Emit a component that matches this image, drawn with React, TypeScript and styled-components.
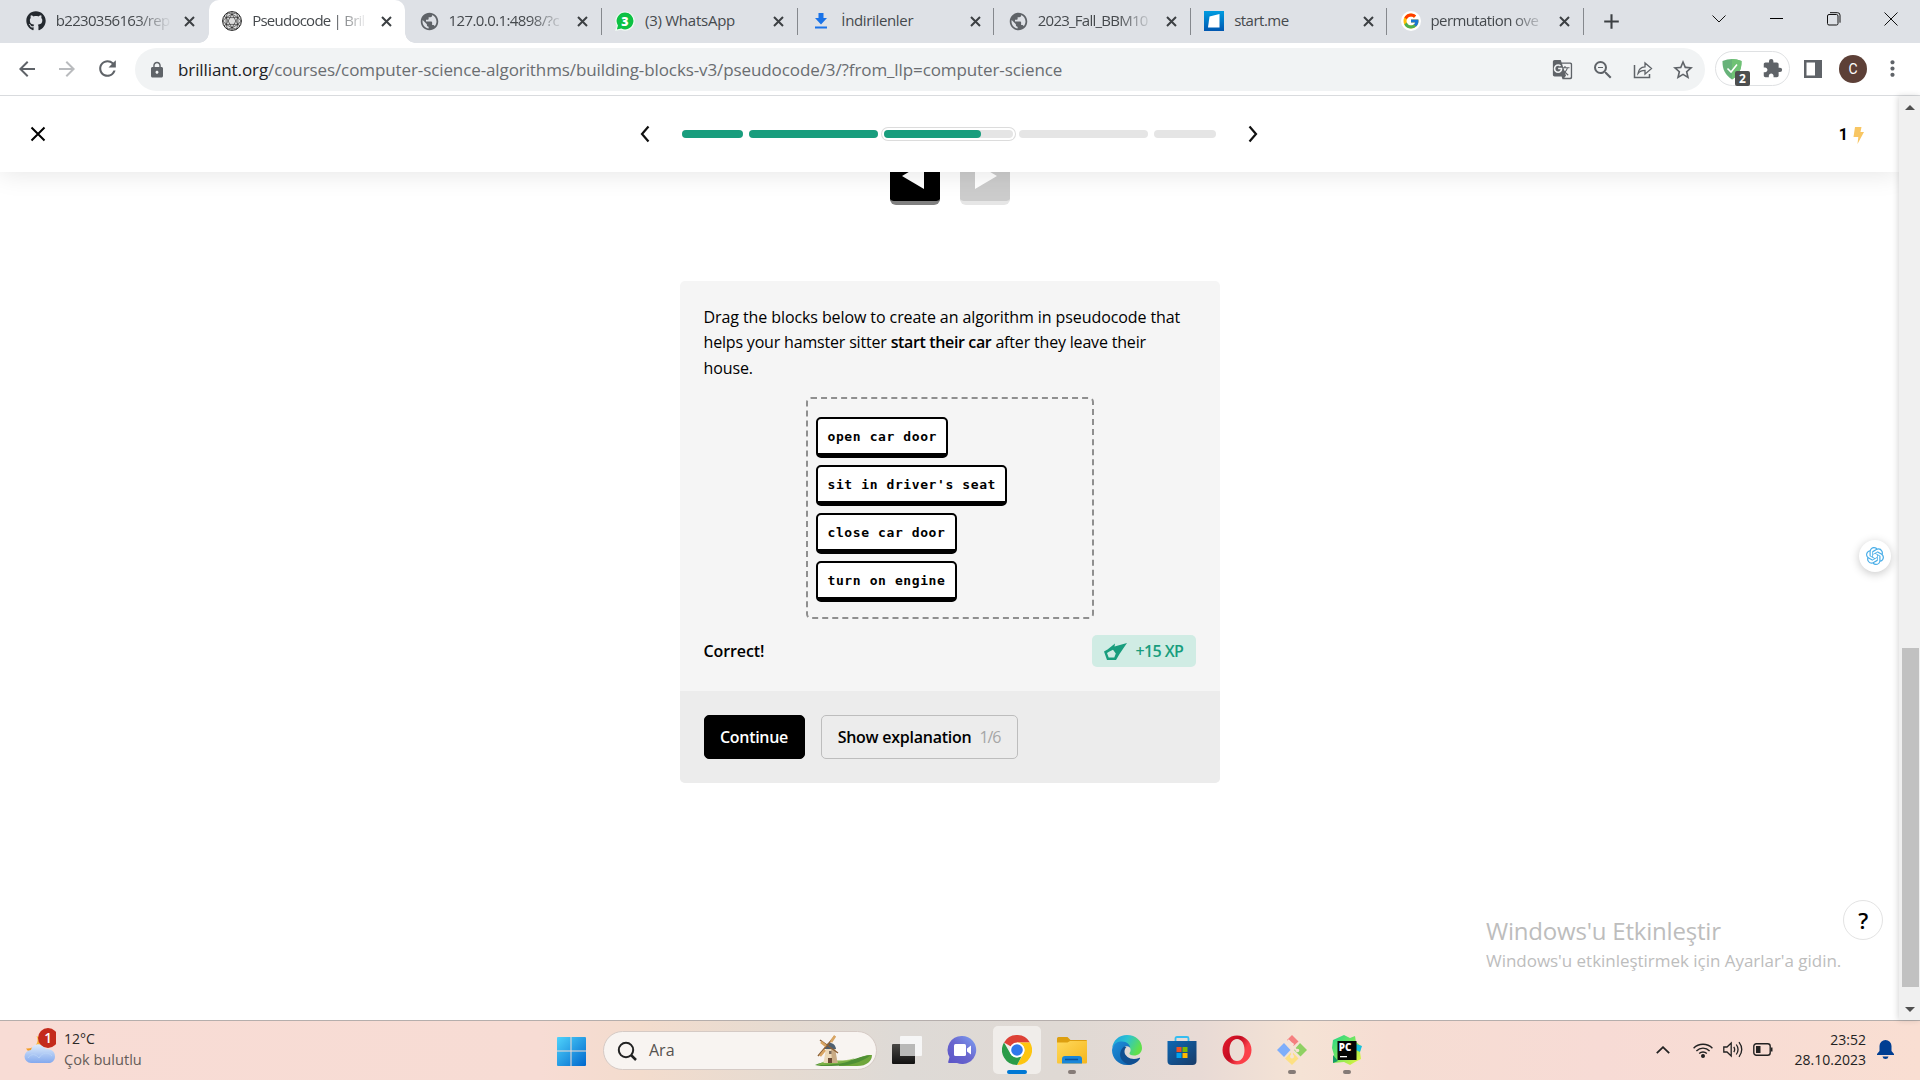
import React from 'react';
import styled, { createGlobalStyle } from 'styled-components';
import { FaGithub } from 'react-icons/fa';
import {
  MdLock, MdExtension, MdStarBorder, MdRefresh, MdPublic, MdArrowBack, MdArrowForward, MdAdd,
  MdGTranslate, MdZoomOut, MdMoreVert,
} from 'react-icons/md';
import { FcGoogle } from 'react-icons/fc';
import { SiOpenai } from 'react-icons/si';

const Global = createGlobalStyle`
  * { box-sizing: border-box; }
  body { margin: 0; overflow: hidden; background: #fff; }
  button { font: inherit; border: 0; padding: 0; background: none; color: inherit; }
  svg { display: block; flex: none; }
`;

const Screen = styled.div`
  width: 1920px;
  height: 1080px;
  display: grid;
  grid-template-rows: 43px 53px 924px 60px;
  overflow: hidden;
  font-family: 'Open Sans', 'Noto Sans', sans-serif;
  color: #000;
`;

/* ---------- tab strip ---------- */
const TabStrip = styled.div`
  display: flex;
  background: #dee1e6;
  padding-left: 12.4px;
`;
const Tab = styled.div<{ $active?: boolean; $line?: boolean }>`
  position: relative;
  width: 196.4px;
  height: 43px;
  display: flex;
  align-items: center;
  padding: 0 0 1px 13.4px;
  color: #45494d;
  border-right: 1px solid transparent;
  border-image: ${p => (p.$line ? 'linear-gradient(transparent 9px, #85888d 9px, #85888d 34px, transparent 34px) 1' : 'none')};
  border-width: 0 1px 0 0;
  ${p => p.$active && `
    background: #fff;
    border-radius: 10px 10px 0 0;
    &::before, &::after {
      content: '';
      position: absolute;
      bottom: 0;
      width: 10px;
      height: 10px;
    }
    &::before { left: -10px; background: radial-gradient(circle at 0 0, transparent 9.5px, #fff 10px); }
    &::after { right: -11px; background: radial-gradient(circle at 100% 0, transparent 9.5px, #fff 10px); }
  `}
`;
const Favicon = styled.span`
  width: 20px;
  height: 20px;
  display: grid;
  place-items: center;
  margin-right: 10px;
`;
const TabTitle = styled.span<{ $spacing: number; $fade?: boolean }>`
  width: 114px;
  padding-bottom: 2px;
  overflow: hidden;
  white-space: nowrap;
  font-size: 15px;
  line-height: 22px;
  letter-spacing: ${p => p.$spacing}px;
  mask-image: ${p => (p.$fade ? 'linear-gradient(90deg, #000 80px, transparent 116px)' : 'none')};
`;
const TabClose = styled.button`
  width: 18px;
  height: 18px;
  display: grid;
  place-items: center;
  margin: 1px 0 0 11px;
`;
const NewTab = styled.button`
  width: 24px;
  display: grid;
  place-items: center;
  margin-left: 15px;
  color: #3c4043;
`;
const WindowButtons = styled.div`
  margin-left: auto;
  display: flex;
  height: 37px;
`;
const WindowButton = styled.button`
  width: 57.4px;
  display: grid;
  place-items: center;
`;

/* ---------- toolbar ---------- */
const Toolbar = styled.div`
  display: flex;
  align-items: flex-start;
  background: #fff;
  border-bottom: 1px solid #d9dbde;
  color: #5f6368;
`;
const NavButtons = styled.div`
  display: flex;
  align-items: center;
  height: 51px;
  width: 135px;
  padding-left: 15px;
  gap: 16px;
`;
const Omnibox = styled.div`
  width: 1570px;
  height: 43px;
  margin-top: 5px;
  border-radius: 22px;
  background: #f1f3f4;
  display: flex;
  align-items: center;
  padding: 0 10px 0 13px;
`;
const Url = styled.span`
  flex: 1;
  margin-left: 12px;
  padding-bottom: 1px;
  font-size: 17px;
  letter-spacing: -0.1px;
  color: #6a6d71;
  b { font-weight: 400; color: #202124; }
`;
const OmniIcons = styled.div`
  display: flex;
  align-items: center;
  gap: 18px;
`;
const ExtensionPill = styled.div`
  width: 75px;
  height: 35px;
  margin: 8px 0 0 10px;
  border: 1px solid #dfe1e3;
  border-radius: 18px;
  display: flex;
  align-items: center;
  justify-content: space-between;
  padding: 0 6px;
`;
const ShieldBox = styled.span`
  position: relative;
  display: block;
`;
const ShieldCount = styled.span`
  position: absolute;
  left: 13px;
  top: 13px;
  width: 15px;
  height: 15px;
  border-radius: 2px;
  background: #4d4f4f;
  color: #fff;
  font: 700 12px/15px 'Open Sans', sans-serif;
  text-align: center;
`;
const Avatar = styled.span`
  width: 28px;
  height: 28px;
  border-radius: 50%;
  background: #5d4037;
  color: #fff;
  font: 400 14px/28px Roboto, sans-serif;
  text-align: center;
`;
const ToolbarEnd = styled.div`
  display: flex;
  align-items: center;
  height: 51px;
  margin-left: 14px;
  gap: 17px;
  svg:last-child { margin-left: -4px; }
`;

/* ---------- page ---------- */
const Viewport = styled.div`
  position: relative;
  display: grid;
  grid-template-columns: 1899px 21px;
  min-height: 0;
`;
const Page = styled.main`
  display: flex;
  flex-direction: column;
  align-items: center;
  overflow: hidden;
  background: #fff;
`;
const LessonHeader = styled.header`
  z-index: 1;
  flex: none;
  width: 100%;
  height: 76px;
  display: grid;
  grid-template-columns: 1fr 620px 1fr;
  align-items: center;
  background: #fff;
  box-shadow: 0 2px 24px rgba(0, 0, 0, 0.1);
  padding: 0 34px 0 29px;
`;
const ProgressNav = styled.div`
  display: flex;
  align-items: center;
  justify-content: space-between;
  margin: 0 -2px 0 2px;
`;
const Segments = styled.div`
  display: flex;
  align-items: center;
  gap: 6px;
`;
const Segment = styled.div<{ $width: number; $fill: number; $current?: boolean }>`
  width: ${p => p.$width}px;
  height: 8px;
  border-radius: 4px;
  background: #e5e5e5;
  box-shadow: ${p => (p.$current ? '0 0 0 2px #fff, 0 0 0 3px #dcdcdc' : 'none')};
  &::before {
    content: '';
    display: block;
    width: ${p => p.$fill}%;
    height: 8px;
    border-radius: 4px;
    background: #189d7d;
  }
`;
const Streak = styled.div`
  justify-self: end;
  display: flex;
  align-items: center;
  gap: 5px;
  margin-right: 1px;
  padding-top: 2px;
  font: 700 16px/20px Roboto, sans-serif;
`;
const Stepper = styled.div`
  display: flex;
  gap: 20px;
  margin-top: -21px;
`;
const StepButton = styled.button<{ $disabled?: boolean }>`
  width: 50px;
  height: 54px;
  padding: 12px ${p => (p.$disabled ? 0 : 3)}px 0 ${p => (p.$disabled ? 3 : 0)}px;
  display: flex;
  justify-content: center;
  border-bottom: 4px solid ${p => (p.$disabled ? '#e6e6e6' : '#808080')};
  border-radius: 6px;
  background: ${p => (p.$disabled ? '#ccc' : '#000')};
`;
const Card = styled.section`
  width: 540px;
  height: 502px;
  margin-top: 76px;
  border-radius: 5px;
  overflow: hidden;
  background: #f5f5f5;
  display: flex;
  flex-direction: column;
`;
const CardBody = styled.div`
  height: 410px;
  padding: 24px 24px 0;
`;
const Prompt = styled.p`
  margin: 0;
  font-size: 16px;
  line-height: 25.4px;
  white-space: nowrap;
  b { font-weight: 600; letter-spacing: -0.36px; }
`;
const Line = styled.span<{ $spacing: number }>`
  display: block;
  letter-spacing: ${p => p.$spacing}px;
`;
const DropZone = styled.div`
  width: 288px;
  height: 222px;
  margin: 15.8px auto 0;
  border: 2px dashed #8f8f8f;
  border-radius: 5px;
  padding: 18px 8px;
  display: flex;
  flex-direction: column;
  align-items: flex-start;
  gap: 7px;
`;
const Block = styled.div`
  height: 41px;
  border: 2px solid #000;
  border-bottom-width: 5px;
  border-radius: 5px;
  background: #fff;
  padding: 1px 9.3px 0 10px;
  font: 700 13px/34px 'DejaVu Sans Mono', 'Liberation Mono', monospace;
  letter-spacing: 0.6px;
`;
const ResultRow = styled.div`
  display: flex;
  justify-content: space-between;
  align-items: center;
  height: 32px;
  margin-top: 16px;
`;
const Label = styled.span<{ $spacing?: number; $size?: number }>`
  font-weight: 600;
  font-size: ${p => p.$size ?? 16}px;
  letter-spacing: ${p => p.$spacing ?? -0.3}px;
  white-space: nowrap;
`;
const XpBadge = styled.div`
  width: 104px;
  height: 32px;
  border-radius: 5px;
  background: #d0ece4;
  color: #189d7d;
  display: flex;
  align-items: center;
  padding-left: 12px;
  gap: 9px;
`;
const CardFooter = styled.footer`
  height: 92px;
  background: #ececec;
  display: flex;
  align-items: center;
  gap: 16px;
  padding: 0 24px;
`;
const ActionButton = styled.button<{ $primary?: boolean }>`
  width: ${p => (p.$primary ? 101 : 197)}px;
  height: 44px;
  border-radius: 5px;
  border: 1px solid ${p => (p.$primary ? '#000' : '#bdbdbd')};
  background: ${p => (p.$primary ? '#000' : 'transparent')};
  color: ${p => (p.$primary ? '#fff' : '#000')};
  display: flex;
  align-items: center;
  justify-content: center;
  gap: 8px;
  small { font-size: 16px; letter-spacing: -1.1px; color: #a6a6a6; }
`;
const RoundButton = styled.button<{ $right: number; $top: number; $size: number; $shadow?: boolean }>`
  position: absolute;
  right: ${p => p.$right}px;
  top: ${p => p.$top}px;
  width: ${p => p.$size}px;
  height: ${p => p.$size}px;
  border-radius: 50%;
  display: grid;
  place-items: center;
  background: #fff;
  border: ${p => (p.$shadow ? '0' : '1px solid #e3e3e3')};
  box-shadow: ${p => (p.$shadow ? '0 2px 10px rgba(0,0,0,.22)' : 'none')};
`;
const Watermark = styled.div`
  position: absolute;
  left: 1486px;
  top: 818px;
  color: #bdbdbd;
  white-space: nowrap;
  div:first-child { font-size: 24px; line-height: 33px; letter-spacing: -0.2px; }
  div:last-child { font-size: 17px; line-height: 27px; letter-spacing: -0.03px; }
`;
const Scrollbar = styled.div`
  z-index: 1;
  display: flex;
  flex-direction: column;
  align-items: center;
  justify-content: space-between;
  background: #f0f0f0;
  box-shadow: -1px 0 6px rgba(0, 0, 0, 0.16);
  padding: 9px 0 8px 1px;
`;
const Thumb = styled.div`
  width: 17px;
  height: 339px;
  margin-top: 518px;
  background: #c1c1c1;
`;

/* ---------- taskbar ---------- */
const Taskbar = styled.div`
  display: grid;
  grid-template-columns: 556px 1fr auto;
  align-items: center;
  border-top: 1px solid #b5aeac;
  background: linear-gradient(90deg, #f8dcd5 0, #f7dcd4 540px, #f3dccd 640px, #e6dbd1 780px, #dedad6 900px, #dfd9d4 1060px, #e8dad5 1200px, #f5e3d5 1300px, #f6ddd3 1390px, #f7dbd5 1600px, #f9ded2 1920px);
`;
const Weather = styled.div`
  display: flex;
  align-items: center;
  gap: 8px;
  padding-left: 24px;
  margin-top: -7px;
`;
const WeatherText = styled.div`
  margin-top: 4px;
  font-size: 14px;
  line-height: 20px;
  color: #2b2927;
  div:last-child { font-size: 14.6px; color: #655c59; }
`;
const TaskApps = styled.div`
  display: flex;
  align-items: center;
`;
const SearchPill = styled.div`
  width: 274px;
  height: 39px;
  margin: 0 6px 0 17px;
  border: 1px solid #d5cac5;
  border-radius: 20px;
  background: #f8f4f1;
  overflow: hidden;
  display: flex;
  align-items: center;
  padding: 0 3px 0 13px;
  font-size: 16px;
  color: #56524f;
  svg:last-child { margin-left: auto; }
  span { margin: -1px 0 0 12px; }
`;
const TaskTile = styled.div<{ $active?: boolean; $mark?: boolean }>`
  width: 48px;
  height: 48px;
  margin: 0 7px 1px 0;
  border-radius: 5px;
  background: ${p => (p.$active ? '#f0edea' : 'transparent')};
  display: flex;
  flex-direction: column;
  align-items: center;
  justify-content: flex-end;
  gap: 5px;
  &::after {
    content: '';
    width: ${p => (p.$active ? 20 : 8)}px;
    height: 4px;
    border-radius: 2px;
    background: ${p => (p.$active ? '#0078d4' : p.$mark ? '#857b77' : 'transparent')};
  }
`;
const Tray = styled.div`
  display: flex;
  align-items: center;
  padding: 0 26px 2px 0;
  color: #222;
`;
const TrayIcons = styled.div`
  display: flex;
  align-items: center;
  gap: 10px;
  margin: 0 19px 0 23px;
`;
const Clock = styled.div`
  width: 74px;
  margin-right: 11px;
  text-align: right;
  font-size: 14px;
  line-height: 20px;
`;

/* ---------- icons ---------- */
const CloseIcon = () => (
  <svg width="11" height="11" viewBox="0 0 11 11" stroke="#3c4043" strokeWidth="2"><path d="m1 1 9 9m0-9-9 9" /></svg>
);
const BrilliantIcon = () => (
  <svg width="20" height="20" viewBox="0 0 20 20" fill="none" stroke="#222" strokeWidth="0.6">
    <circle cx="10" cy="10" r="9.400" fill="#dcdcdc" strokeWidth="1" />
    <path d="M10 3.200 15.900 6.600v6.800L10 16.800 4.100 13.400V6.600zM10 3.200V.8M15.900 6.600l2.100-1.300M15.900 13.400l2.100 1.400M10 16.800v2.400M4.100 13.400 2 14.800M4.100 6.600 2 5.300M10 3.200 5.500 1.800 4.100 6.600.8 10l3.300 3.400 1.400 4.900 4.500-1.500 4.500 1.500 1.400-4.900 3.300-3.400-3.300-3.400-1.400-4.800zM10 3.200l5.900 10.200H4.100zM10 16.800 4.100 6.600h11.800z" />
  </svg>
);
const WhatsAppIcon = () => (
  <svg width="20" height="20" viewBox="0 0 20 20">
    <path d="M10 1a9 9 0 1 1-3.900 17.100L1 19.300l1.300-4.700A9 9 0 0 1 10 1z" fill="#0cc143" stroke="#f2faf4" strokeWidth="1.200" />
    <text x="9.800" y="14.500" fontFamily="Open Sans, sans-serif" fontWeight="800" fontSize="12.500" fill="#fff" textAnchor="middle">3</text>
  </svg>
);
const DownloadIcon = () => (
  <svg width="14" height="16" viewBox="0 0 14 16" fill="#1a73e8">
    <path d="M4.500 0h5v5H13l-6 6.500L1 5h3.500zM1 13.500h12v2H1z" />
  </svg>
);
const StartMeIcon = () => (
  <svg width="20" height="20" viewBox="0 0 20 20">
    <defs><linearGradient id="sm" x2="0" y2="1"><stop stopColor="#009ce0" /><stop offset="1" stopColor="#0057b0" /></linearGradient></defs>
    <path fill="url(#sm)" d="M0 0h20v20H0z" />
    <path d="m5.500 5.500 10-2.500v13.500H4z" fill="#fff" />
  </svg>
);
const GoogleIcon = () => (
  <svg width="20" height="20" viewBox="0 0 20 20">
    <circle cx="10" cy="10" r="10" fill="#fff" />
    <FcGoogle x="1" y="1" width="18" height="18" size={18} />
  </svg>
);
const ShareIcon = () => (
  <svg width="20" height="20" viewBox="0 0 20 20" fill="none" stroke="#5f6368" strokeWidth="1.500">
    <path d="M1.500 5v12.500h15V14" />
    <path d="M5 13.500c.6-4.500 3.200-6.500 7-6.700V3l6.500 5.600-6.500 5.600v-3.800c-3.200 0-5.300.9-7 3.100z" strokeWidth="1.300" />
  </svg>
);
const ShieldIcon = () => (
  <svg width="20" height="22" viewBox="0 0 20 22">
    <path d="M10 1c3 0 6.500.8 9.500 2 .2 8-2.500 14-9.500 18.500C3 17 .3 11 .5 3 3.500 1.800 7 1 10 1z" fill="#67b279" />
    <path d="M10 1c3 0 6.500.8 9.500 2 .2 8-2.500 14-9.500 18.500z" fill="#6fc274" />
    <path d="m5.500 10.500 3.500 3.500 6-7.500" fill="none" stroke="#fff" strokeWidth="1.600" />
  </svg>
);
const SidePanelIcon = () => (
  <svg width="18" height="18" viewBox="0 0 18 18"><path fill="#5f6368" fillRule="evenodd" d="M0 0h18v18H0zM2.500 2.500h8.500v13H2.500z" /></svg>
);
const Chevron = ({ flip }: { flip?: boolean }) => (
  <svg width="12" height="18" viewBox="0 0 12 18" fill="none" stroke="#111" strokeWidth="2.200">
    <path d={flip ? 'M2.500 1.500 9 9l-6.500 7.500' : 'M9.500 1.500 3 9l6.500 7.500'} />
  </svg>
);
const CometIcon = () => (
  <svg width="23" height="17" viewBox="0 0 23 17" fill="#189d7d">
    <path fillRule="evenodd" d="M23 0 15.500 11 12 17H3L0 8.500 3.500 6.500 11 .5 10.500 3.500zM5 8.800 3 10l1.700 4.600h5.600l1.500-4.200L9 6.800z" />
  </svg>
);
const WeatherIcon = () => (
  <svg width="32" height="40" viewBox="0 0 32 40">
    <defs>
      <linearGradient id="cl" x2="0" y2="1"><stop stopColor="#e0edfb" /><stop offset="1" stopColor="#83a9ee" /></linearGradient>
      <linearGradient id="mo" x2="0" y2="1"><stop stopColor="#ffc64b" /><stop offset="1" stopColor="#f09320" /></linearGradient>
    </defs>
    <path d="M12.500 9c3.500 7-2 13-10.500 12.500 3 6 14 6 18-2 1-6-2-9-7.500-10.500z" fill="url(#mo)" />
    <path d="M7 36a6.500 6.500 0 0 1 0-13c1.500-7 11.500-8 14.500-1 4 0 9.500 1 9.500 7.500 0 4-3 6.500-6 6.500z" fill="url(#cl)" />
    <path d="M4 31c3-5 8-4 11 0 3-6 10-6 13-2" stroke="#b7d2f7" fill="none" />
    <circle cx="24" cy="11" r="10" fill="#c42b1c" />
    <text x="24" y="16" fill="#fff" fontFamily="Open Sans, sans-serif" fontSize="13.500" fontWeight="600" textAnchor="middle">1</text>
  </svg>
);
const WindowsIcon = () => (
  <svg width="30" height="30" viewBox="0 0 30 30">
    <defs><linearGradient id="wi" x2="1" y2="1"><stop stopColor="#4fd3fb" /><stop offset="1" stopColor="#0067cd" /></linearGradient></defs>
    <path fill="url(#wi)" d="M1 2q0-1 1-1h12.500v13.500H1zM15.500 1H29q1 0 1 1v12.500H15.500zM1 15.500h13.500V30H2q-1 0-1-1zM15.500 15.500H30V29q0 1-1 1H15.500z" />
  </svg>
);
const WindmillArt = () => (
  <svg width="58" height="34" viewBox="0 0 58 34">
    <path d="M24 29C38 30 46 20 57 21c0 6-5 11-15 11H24z" fill="#6fa63c" />
    <path d="M0 31c10-5 20-3 28-4 12-1 18-5 28-6-10 8-22 11-40 11C8 32 3 32 0 31z" fill="#4f8f35" />
    <path d="M10 27c10-2 18 1 30-3-6 5-20 7-38 7z" fill="#8fbf4d" opacity=".7" />
    <path d="M11 14h9l2.500 15h-14z" fill="#ecd9b9" />
    <path d="M16 14h4l2.500 15H17z" fill="#c9ab85" />
    <path d="M10 15c0-8 10-8 11 0z" fill="#4f6071" />
    <path d="M13 24h4v5h-4z" fill="#6b4a34" />
    <path d="M14 17h2.500v3H14z" fill="#7b6a5c" />
    <path d="M3 22 20 2M5 6l18 13" stroke="#8c6137" strokeWidth="1.500" />
    <path d="m5 22 5-6M16 8l4-6M6 8l5 4" stroke="#d9a562" strokeWidth="2.600" />
  </svg>
);
const TaskViewIcon = () => (
  <svg width="30" height="30" viewBox="0 0 30 30">
    <defs><linearGradient id="tv" x2="0" y2="1"><stop stopColor="#4a4845" /><stop offset="1" stopColor="#111" /></linearGradient></defs>
    <rect y="9" width="23" height="20" rx="1" fill="url(#tv)" />
    <rect x="8" y="1" width="22" height="20" rx="1" fill="#f6f6f6" />
    <rect x="8" y="9" width="15" height="12" fill="#b9b9b8" />
  </svg>
);
const ChatIcon = () => (
  <svg width="30" height="30" viewBox="0 0 30 30">
    <defs><linearGradient id="ch" x1="1" x2="0" y2="1"><stop stopColor="#7ea3f4" /><stop offset=".5" stopColor="#6a67cf" /><stop offset="1" stopColor="#5a53c6" /></linearGradient></defs>
    <path d="M15 1a14 14 0 1 1-5 27H2c-1 0-1-.8-.7-1.500L2.500 22A14 14 0 0 1 15 1z" fill="url(#ch)" />
    <rect x="7" y="9" width="12" height="12" rx="1.500" fill="#fff" /><path d="m20 13.500 4-3v9l-4-3z" fill="#fff" />
  </svg>
);
const ChromeIcon = () => (
  <svg width="30" height="30" viewBox="0 0 30 30">
    <path d="M15 15 2 7.500A15 15 0 0 1 28 7.500H15z" fill="#dd4136" />
    <path d="M28 7.500A15 15 0 0 1 15 30l6.500-11.200a7.500 7.500 0 0 0 0-7.600L15 7.500z" fill="#fdc510" />
    <path d="M15 30A15 15 0 0 1 2 7.500l6.500 11.200A7.500 7.500 0 0 0 15 22.500l4.500-1z" fill="#2a9b48" />
    <circle cx="15" cy="15" r="7.500" fill="#fff" /><circle cx="15" cy="15" r="5.800" fill="#2f78ea" />
  </svg>
);
const FolderIcon = () => (
  <svg width="30" height="30" viewBox="0 0 30 30">
    <defs><linearGradient id="fo" x2="1" y2="1"><stop stopColor="#ffd95c" /><stop offset="1" stopColor="#f5b61c" /></linearGradient></defs>
    <path d="M0 3.500Q0 2 1.500 2h9l3 3H29q1 0 1 1v6H0z" fill="#dd9f10" />
    <path d="M0 7.500h10.500L13 6h17v21.500q0 1-1 1H1q-1 0-1-1z" fill="url(#fo)" />
    <path d="M5 28.500v-4.500q0-3 3-3h14q3 0 3 3v4.500z" fill="#1a86d8" /><path d="M8 24.500h13" stroke="#0b539c" strokeWidth="1.500" />
  </svg>
);
const EdgeIcon = () => (
  <svg width="30" height="30" viewBox="0 0 30 30">
    <defs>
      <linearGradient id="e1" x2="1" y2=".4"><stop stopColor="#1d9be0" /><stop offset=".5" stopColor="#2bc3d2" /><stop offset="1" stopColor="#60e04c" /></linearGradient>
      <linearGradient id="e2" x2="1" y2="1"><stop stopColor="#1f90dc" /><stop offset="1" stopColor="#0c59a4" /></linearGradient>
    </defs>
    <path d="M0 14C1 5 7 0 15 0c9 0 15 6 15 13 0 5-4 7.500-8 7.500-3 0-5-1-4.500-2.500 1.500-2 1.500-4 0-6C13 6 2 7 0 14z" fill="url(#e1)" />
    <path d="M0 15C1 8 6 6.500 10 6.500c5 0 8 3.500 8 6-4-3-8 0-8 5C10 25 18 30 25 26.500c-3 3-7 3.500-10 3.500C6 30 0 23 0 15z" fill="url(#e2)" />
    <path d="M12 11.500C5 18 8 27 17 29.500c5 0 9-2.500 11-6 .3-.8-.3-1-1-.6C20 26 13 22 12.500 17c0-2 .5-4 2-5z" fill="#104f91" />
  </svg>
);
const StoreIcon = () => (
  <svg width="30" height="30" viewBox="0 0 30 30">
    <defs><linearGradient id="st" x2="1" y2="1"><stop stopColor="#0e67b2" /><stop offset="1" stopColor="#173b69" /></linearGradient></defs>
    <path d="M8.500 7V3.500q0-1.500 1.500-1.500h10q1.500 0 1.500 1.500V7" fill="none" stroke="#35bdf0" strokeWidth="1.800" />
    <path d="M.5 6h29v20q0 4-4 4h-21q-4 0-4-4z" fill="url(#st)" />
    <path d="M9.500 12h5v5h-5z" fill="#f25022" /><path d="M15.500 12h5v5h-5z" fill="#7fba00" />
    <path d="M9.500 18h5v5h-5z" fill="#00a4ef" /><path d="M15.500 18h5v5h-5z" fill="#ffb900" />
  </svg>
);
const OperaIcon = () => (
  <svg width="30" height="30" viewBox="0 0 30 30">
    <defs><linearGradient id="op" x2="1" y2=".6"><stop stopColor="#e91c2c" /><stop offset=".5" stopColor="#c30c22" /><stop offset=".8" stopColor="#fb4049" /></linearGradient></defs>
    <path fill="url(#op)" fillRule="evenodd" d="M15 .5a14.500 14.500 0 1 1 0 29 14.500 14.500 0 1 1 0-29zM15 4C10 4 7.500 9 7.500 15S10 26 15 26s7.500-5 7.500-11S20 4 15 4z" />
  </svg>
);
const GitIcon = () => (
  <svg width="30" height="30" viewBox="0 0 30 30">
    <path d="m15 0 6.500 6.500-5 4.500-6.500-6z" fill="#f58080" />
    <path d="m23 8 7 7-6.500 6.500-6.500-6.500z" fill="#8fd163" />
    <path d="m7 8 6.500 7L7 22l-7-7z" fill="#7eaefb" />
    <path d="m15 16.500 6.500 7L15 30l-7-6.500z" fill="#fde083" />
    <path d="m11 5 5 5M15 10v12M15 11l5 4.500" stroke="#f6e3d6" strokeWidth="1.800" fill="none" />
    <circle cx="15" cy="21.500" r="2" fill="#f6e3d6" /><circle cx="20.500" cy="15.500" r="1.800" fill="#f6e3d6" /><circle cx="15" cy="9.500" r="1.800" fill="#f6e3d6" />
  </svg>
);
const PyCharmIcon = () => (
  <svg width="30" height="30" viewBox="0 0 30 30">
    <defs><linearGradient id="py" x2="1" y2="1"><stop stopColor="#1fd48a" /><stop offset=".5" stopColor="#7be85b" /><stop offset="1" stopColor="#f2f53a" /></linearGradient></defs>
    <path d="m1 5 11-5 6 3 5-2 1 6 5 4-1 6 1 7-6 3-5 3-6-3-11 1 1-8-2-7z" fill="url(#py)" />
    <path d="m24 9 6 2-2 6-4-2z" fill="#19c1de" /><path d="m1 20 5 6-5 2z" fill="#159a66" />
    <rect x="5.500" y="6" width="19" height="19" fill="#050505" />
    <text x="6.800" y="15.500" fill="#fff" fontFamily="Open Sans, sans-serif" fontWeight="800" fontSize="9.800">PC</text>
    <path d="M8 21h7v1.300H8z" fill="#fff" />
  </svg>
);

interface TabInfo { title: string; icon: React.ReactNode; spacing: number; fade?: boolean; active?: boolean; line?: boolean }
const tabs: TabInfo[] = [
  { title: 'b2230356163/rep', icon: <FaGithub size={20} color="#24292f" />, spacing: -0.7, fade: true },
  { title: 'Pseudocode | Bril', icon: <BrilliantIcon />, spacing: -0.75, fade: true, active: true },
  { title: '127.0.0.1:4898/?c', icon: <MdPublic size={21} color="#5f6368" />, spacing: -0.6, fade: true, line: true },
  { title: '(3) WhatsApp', icon: <WhatsAppIcon />, spacing: -0.25, line: true },
  { title: 'İndirilenler', icon: <DownloadIcon />, spacing: -0.35, line: true },
  { title: '2023_Fall_BBM10', icon: <MdPublic size={21} color="#5f6368" />, spacing: -0.75, fade: true, line: true },
  { title: 'start.me', icon: <StartMeIcon />, spacing: -0.5, line: true },
  { title: 'permutation ove', icon: <GoogleIcon />, spacing: -0.6, fade: true, line: true },
];

const segments = [
  { width: 61, fill: 100 },
  { width: 129, fill: 100 },
  { width: 129, fill: 75, current: true },
  { width: 129, fill: 0 },
  { width: 62, fill: 0 },
];

const blocks = ['open car door', "sit in driver's seat", 'close car door', 'turn on engine'];

const apps = [
  { id: 'view', icon: <TaskViewIcon /> },
  { id: 'chat', icon: <ChatIcon /> },
  { id: 'chrome', icon: <ChromeIcon />, active: true },
  { id: 'files', icon: <FolderIcon />, mark: true },
  { id: 'edge', icon: <EdgeIcon /> },
  { id: 'store', icon: <StoreIcon /> },
  { id: 'opera', icon: <OperaIcon /> },
  { id: 'git', icon: <GitIcon />, mark: true },
  { id: 'pycharm', icon: <PyCharmIcon />, mark: true },
];

export default function App() {
  return (
    <Screen>
      <Global />
      <TabStrip>
        {tabs.map(t => (
          <Tab key={t.title} $active={t.active} $line={t.line}>
            <Favicon>{t.icon}</Favicon>
            <TabTitle $spacing={t.spacing} $fade={t.fade}>{t.title}</TabTitle>
            <TabClose><CloseIcon /></TabClose>
          </Tab>
        ))}
        <NewTab><MdAdd size={25} /></NewTab>
        <WindowButtons>
          <WindowButton><svg width="14" height="8" fill="none" stroke="#111"><path d="m.5.5 6.500 6.500L13.500.5" /></svg></WindowButton>
          <WindowButton><svg width="13" height="1"><path d="M0 0h13v1H0z" /></svg></WindowButton>
          <WindowButton>
            <svg width="14" height="14" fill="none" stroke="#111"><rect x=".5" y="2.500" width="10.500" height="10.500" rx="1.500" /><path d="M3 .7h7.500q2.500 0 2.500 2.500v7.500" /></svg>
          </WindowButton>
          <WindowButton><svg width="14" height="14" fill="none" stroke="#111"><path d="m.5.5 13 13m0-13-13 13" /></svg></WindowButton>
        </WindowButtons>
      </TabStrip>

      <Toolbar>
        <NavButtons>
          <MdArrowBack size={24} />
          <MdArrowForward size={24} color="#b9bbbe" />
          <MdRefresh size={25} />
        </NavButtons>
        <Omnibox>
          <MdLock size={18} />
          <Url><b>brilliant.org</b>/courses/computer-science-algorithms/building-blocks-v3/pseudocode/3/?from_llp=computer-science</Url>
          <OmniIcons>
            <MdGTranslate size={21} />
            <MdZoomOut size={24} />
            <ShareIcon />
            <MdStarBorder size={24} />
          </OmniIcons>
        </Omnibox>
        <ExtensionPill>
          <ShieldBox><ShieldIcon /><ShieldCount>2</ShieldCount></ShieldBox>
          <MdExtension size={21} />
        </ExtensionPill>
        <ToolbarEnd>
          <SidePanelIcon />
          <Avatar>C</Avatar>
          <MdMoreVert size={25} />
        </ToolbarEnd>
      </Toolbar>

      <Viewport>
        <Page>
          <LessonHeader>
            <svg width="18" height="18" viewBox="0 0 18 18" stroke="#000" strokeWidth="2"><path d="m2.500 2.500 13 13m0-13-13 13" /></svg>
            <ProgressNav>
              <Chevron />
              <Segments>
                {segments.map((s, i) => <Segment key={i} $width={s.width} $fill={s.fill} $current={s.current} />)}
              </Segments>
              <Chevron flip />
            </ProgressNav>
            <Streak>
              1
              <svg width="11" height="17" viewBox="0 0 11 17" fill="#f8c663"><path d="M2 0h6.500L7.500 5H11L4.500 17l.8-7H.5z" /></svg>
            </Streak>
          </LessonHeader>
          <Stepper>
            <StepButton><svg width="22" height="26" fill="#fff"><path d="M22 0v26L0 13z" /></svg></StepButton>
            <StepButton $disabled><svg width="22" height="26" fill="#fff"><path d="M0 0v26l22-13z" /></svg></StepButton>
          </Stepper>
          <Card>
            <CardBody>
              <Prompt>
                <Line $spacing={-0.09}>Drag the blocks below to create an algorithm in pseudocode that</Line>
                <Line $spacing={-0.18}>helps your hamster sitter <b>start their car</b> after they leave their</Line>
                <Line $spacing={-0.1}>house.</Line>
              </Prompt>
              <DropZone>
                {blocks.map(b => <Block key={b}>{b}</Block>)}
              </DropZone>
              <ResultRow>
                <Label $spacing={-0.1}>Correct!</Label>
                <XpBadge><CometIcon /><Label $spacing={-0.6}>+15 XP</Label></XpBadge>
              </ResultRow>
            </CardBody>
            <CardFooter>
              <ActionButton $primary><Label $spacing={-0.3}>Continue</Label></ActionButton>
              <ActionButton><Label $spacing={-0.25}>Show explanation</Label><small>1/6</small></ActionButton>
            </CardFooter>
          </Card>
        </Page>
        <Scrollbar>
          <svg width="10" height="5" fill="#505050"><path d="M0 5 5 0l5 5z" /></svg>
          <Thumb />
          <svg width="10" height="5" fill="#505050"><path d="m0 0 5 5 5-5z" /></svg>
        </Scrollbar>
        <RoundButton $right={29} $top={444} $size={32} $shadow><SiOpenai size={18} color="#4aaee8" /></RoundButton>
        <RoundButton $right={37} $top={804} $size={40}><Label $size={22}>?</Label></RoundButton>
        <Watermark>
          <div>Windows'u Etkinleştir</div>
          <div>Windows'u etkinleştirmek için Ayarlar'a gidin.</div>
        </Watermark>
      </Viewport>

      <Taskbar>
        <Weather>
          <WeatherIcon />
          <WeatherText><div>12°C</div><div>Çok bulutlu</div></WeatherText>
        </Weather>
        <TaskApps>
          <WindowsIcon />
          <SearchPill>
            <svg width="20" height="20" viewBox="0 0 20 20" fill="none" stroke="#222" strokeWidth="2"><circle cx="9" cy="9" r="7.200" /><path d="m14 14 5 5" strokeWidth="2.500" /></svg>
            <span>Ara</span>
            <WindmillArt />
          </SearchPill>
          {apps.map(a => <TaskTile key={a.id} $active={a.active} $mark={a.mark}>{a.icon}</TaskTile>)}
        </TaskApps>
        <Tray>
          <svg width="14" height="8" fill="none" stroke="#222" strokeWidth="1.800"><path d="m.8 7.200 6.200-6 6.200 6" /></svg>
          <TrayIcons>
            <svg width="20" height="16" viewBox="0 0 20 16" fill="none" stroke="#222" strokeWidth="1.400">
              <path d="M.6 6.200a13.300 13.300 0 0 1 18.800 0M3.400 8.900a9.300 9.300 0 0 1 13.200 0M6.200 11.600a5.400 5.400 0 0 1 7.600 0" /><circle cx="10" cy="14" r="1.300" fill="#222" />
            </svg>
            <svg width="20" height="17" viewBox="0 0 20 17" fill="none" stroke="#222" strokeWidth="1.300">
              <path d="M.8 6v5H4l4.200 4V2L4 6zM10.800 5.800q1.700 2.700 0 5.400M13.300 3.500q3.500 5 0 10M16 1.200q5.500 7.300 0 14.600" />
            </svg>
            <svg width="20" height="13" viewBox="0 0 20 13"><rect x=".8" y=".8" width="16.400" height="11.400" rx="2.500" fill="none" stroke="#222" strokeWidth="1.400" /><path d="M3 3h4.500v7H3zM18 4.500h1.500v4H18z" fill="#222" /></svg>
          </TrayIcons>
          <Clock><div>23:52</div><div>28.10.2023</div></Clock>
          <svg width="17" height="19" viewBox="0 0 17 19" fill="#003e92"><path d="M8.500 0A6 6 0 0 1 14.500 6v5l2.500 3v1H0v-1l2.500-3V6a6 6 0 0 1 6-6zM5.500 16.500h6q-.5 2.500-3 2.500t-3-2.500z" /></svg>
        </Tray>
      </Taskbar>
    </Screen>
  );
}
